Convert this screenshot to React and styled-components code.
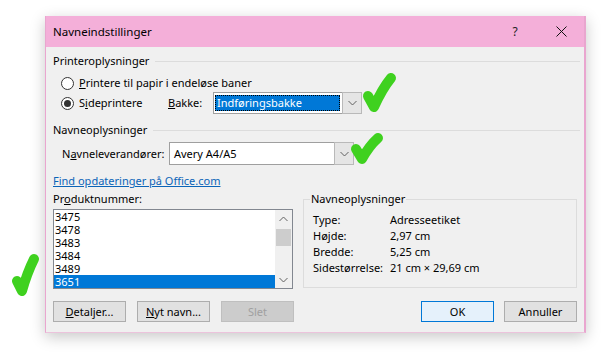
import React from "react";
import styled, { createGlobalStyle } from "styled-components";

const Global = createGlobalStyle`
  html, body { margin: 0; padding: 0; background: #ffffff; }
  body { font-family: "Noto Sans", "Open Sans", sans-serif; font-size: 11px; color: #000; }
  * { box-sizing: border-box; }
`;

const Page = styled.div`
  position: relative;
  width: 608px;
  height: 355px;
  padding: 16px 0 0 45px;
  overflow: hidden;
`;

const Dialog = styled.div`
  width: 541px;
  height: 317px;
  background: #f0f0f0;
  border-left: 1px solid #e9a6cf;
  border-right: 2px solid #e9a6cf;
  border-bottom: 1px solid #ecc3dc;
  box-shadow: 0 4px 14px rgba(0, 0, 0, 0.22);
  display: flex;
  flex-direction: column;
`;

const TitleBar = styled.div`
  height: 31px;
  background: #f4afd9;
  display: flex;
  align-items: center;
  padding-left: 7px;
`;

const TitleText = styled.div`
  flex: 1;
  font-size: 11.5px;
  line-height: 16px;
`;

const TitleButton = styled.div`
  width: 46px;
  height: 31px;
  display: flex;
  align-items: center;
  justify-content: center;
  font-size: 12px;
  color: #222;
`;

const Body = styled.div`
  flex: 1;
  padding: 6px 7px 0 7px;
  display: flex;
  flex-direction: column;
`;

const SectionHeader = styled.div`
  display: flex;
  align-items: center;
  height: 16px;
  margin-top: ${(p) => p.$mt || 0}px;
  margin-right: -3px;
  line-height: 16px;
  &::after {
    content: "";
    flex: 1;
    height: 1px;
    background: #dcdcdc;
    margin-left: 6px;
  }
`;

const Row = styled.div`
  display: flex;
  align-items: center;
  height: ${(p) => p.$h || 16}px;
  margin-top: ${(p) => p.$mt || 0}px;
  padding-left: ${(p) => p.$indent || 0}px;
`;

const Radio = styled.span`
  width: 13px;
  height: 13px;
  border: 1px solid #333;
  border-radius: 50%;
  background: #fff;
  display: flex;
  align-items: center;
  justify-content: center;
  margin-right: 5px;
  flex: none;
  &::after {
    content: "";
    width: 7px;
    height: 7px;
    border-radius: 50%;
    background: ${(p) => (p.$checked ? "#333" : "transparent")};
  }
`;

const Label = styled.span`
  display: inline-block;
  width: ${(p) => (p.$w ? `${p.$w}px` : "auto")};
  line-height: 16px;
  white-space: nowrap;
  flex: none;
`;

const Combo = styled.div`
  width: ${(p) => p.$w}px;
  height: ${(p) => p.$h}px;
  border: 1px solid #9f9f9f;
  background: #fff;
  display: flex;
  align-items: stretch;
`;

const ComboText = styled.div`
  flex: 1;
  display: flex;
  align-items: center;
  padding: 2px 2px 2px ${(p) => (p.$selected ? 1 : 4)}px;
  min-width: 0;
`;

const Highlight = styled.span`
  flex: 1;
  height: 100%;
  background: #0078d7;
  color: #fff;
  outline: 1px dotted #000;
  outline-offset: -1px;
  padding-left: 2px;
  display: flex;
  align-items: center;
  line-height: 16px;
`;

const DropButton = styled.div`
  width: 20px;
  background: #e5e5e5;
  border: 1px solid #b9b9b9;
  margin: -1px -1px -1px 0;
  display: flex;
  align-items: center;
  justify-content: center;
`;

const Link = styled.a`
  color: #0b64b8;
  text-decoration: underline;
  line-height: 16px;
  margin-top: 8px;
  align-self: flex-start;
  cursor: pointer;
`;

const Lower = styled.div`
  display: grid;
  grid-template-columns: 240px 274px;
  column-gap: 10px;
  margin-top: 2px;
`;

const LeftCol = styled.div`
  display: flex;
  flex-direction: column;
`;

const ListBox = styled.div`
  margin-top: 2px;
  height: 80px;
  border: 1px solid #828790;
  background: #fff;
  display: flex;
`;

const Items = styled.div`
  flex: 1;
  display: flex;
  flex-direction: column;
`;

const Item = styled.div`
  height: 13px;
  line-height: 13px;
  padding-left: 1px;
  background: ${(p) => (p.$selected ? "#0078d7" : "transparent")};
  color: ${(p) => (p.$selected ? "#fff" : "#000")};
`;

const ScrollBar = styled.div`
  width: 17px;
  background: #f0f0f0;
  display: flex;
  flex-direction: column;
`;

const ScrollArrow = styled.div`
  height: 17px;
  display: flex;
  align-items: center;
  justify-content: center;
`;

const ScrollTrack = styled.div`
  flex: 1;
  padding: 2px 1px 0 1px;
`;

const Thumb = styled.div`
  height: 17px;
  background: #cdcdcd;
`;

const GroupBox = styled.fieldset`
  margin: 0;
  padding: 5px 9px 10px 9px;
  border: 1px solid #dcdcdc;
  height: 97px;
  min-width: 0;
`;

const Legend = styled.legend`
  padding: 0 1px;
  margin-left: -3px;
  line-height: 16px;
`;

const InfoRow = styled.div`
  display: grid;
  grid-template-columns: 77px 1fr;
  height: 16px;
  line-height: 16px;
`;

const ButtonRow = styled.div`
  display: flex;
  margin-top: 12px;
`;

const ButtonGroup = styled.div`
  display: flex;
  gap: ${(p) => p.$gap}px;
  margin-left: ${(p) => (p.$right ? "auto" : "0")};
`;

const Button = styled.div`
  width: 73px;
  height: 21px;
  display: flex;
  align-items: center;
  justify-content: center;
  line-height: 16px;
  background: ${(p) => (p.$default ? "#e5f1fb" : p.$disabled ? "#cccccc" : "#e1e1e1")};
  border: 1px solid ${(p) => (p.$default ? "#0078d7" : p.$disabled ? "#bfbfbf" : "#adadad")};
  color: ${(p) => (p.$disabled ? "#a0a0a0" : "#000")};
`;

const Check = styled.svg`
  position: absolute;
  left: ${(p) => p.$x}px;
  top: ${(p) => p.$y}px;
  overflow: visible;
`;

const Chevron = ({ up, color = "#606060" }) => (
  <svg width="9" height="6" viewBox="0 0 9 6">
    <polyline
      points={up ? "0.5,5 4.5,1 8.5,5" : "0.5,1 4.5,5 8.5,1"}
      fill="none"
      stroke={color}
      strokeWidth="1"
    />
  </svg>
);

const CloseIcon = () => (
  <svg width="11" height="11" viewBox="0 0 11 11">
    <path d="M0.5 0.5 L10.5 10.5 M10.5 0.5 L0.5 10.5" stroke="#111" strokeWidth="1" />
  </svg>
);

const CheckMark = ({ x, y, d }) => (
  <Check $x={x} $y={y} width="40" height="45">
    <path
      d={d}
      fill="none"
      stroke="#3fd11f"
      strokeWidth="10"
      strokeLinecap="round"
      strokeLinejoin="round"
    />
  </Check>
);

const items = ["3475", "3478", "3483", "3484", "3489", "3651"];

export default function App() {
  return (
    <>
      <Global />
      <Page>
        <Dialog>
          <TitleBar>
            <TitleText>Navneindstillinger</TitleText>
            <TitleButton>?</TitleButton>
            <TitleButton>
              <CloseIcon />
            </TitleButton>
          </TitleBar>
          <Body>
            <SectionHeader>Printeroplysninger</SectionHeader>
            <Row $mt={6} $indent={8}>
              <Radio />
              <Label>
                <u>P</u>rintere til papir i endeløse baner
              </Label>
            </Row>
            <Row $mt={1} $h={22} $indent={8}>
              <Radio $checked />
              <Label $w={89}>
                S<u>i</u>deprintere
              </Label>
              <Label $w={45}>
                <u>B</u>akke:
              </Label>
              <Combo $w={149} $h={22}>
                <ComboText $selected>
                  <Highlight>Indføringsbakke</Highlight>
                </ComboText>
                <DropButton>
                  <Chevron />
                </DropButton>
              </Combo>
            </Row>
            <SectionHeader $mt={8}>Navneoplysninger</SectionHeader>
            <Row $mt={4} $h={23} $indent={9}>
              <Label $w={107}>
                N<u>a</u>vneleverandører:
              </Label>
              <Combo $w={185} $h={23}>
                <ComboText>Avery A4/A5</ComboText>
                <DropButton>
                  <Chevron />
                </DropButton>
              </Combo>
            </Row>
            <Link>Find opdateringer på Office.com</Link>
            <Lower>
              <LeftCol>
                <Label>
                  Pr<u>o</u>duktnummer:
                </Label>
                <ListBox>
                  <Items>
                    {items.map((it) => (
                      <Item key={it} $selected={it === "3651"}>
                        {it}
                      </Item>
                    ))}
                  </Items>
                  <ScrollBar>
                    <ScrollArrow>
                      <Chevron up />
                    </ScrollArrow>
                    <ScrollTrack>
                      <Thumb />
                    </ScrollTrack>
                    <ScrollArrow>
                      <Chevron />
                    </ScrollArrow>
                  </ScrollBar>
                </ListBox>
              </LeftCol>
              <GroupBox>
                <Legend>Navneoplysninger</Legend>
                <InfoRow>
                  <span>Type:</span>
                  <span>Adresseetiket</span>
                </InfoRow>
                <InfoRow>
                  <span>Højde:</span>
                  <span>2,97 cm</span>
                </InfoRow>
                <InfoRow>
                  <span>Bredde:</span>
                  <span>5,25 cm</span>
                </InfoRow>
                <InfoRow>
                  <span>Sidestørrelse:</span>
                  <span>21 cm × 29,69 cm</span>
                </InfoRow>
              </GroupBox>
            </Lower>
            <ButtonRow>
              <ButtonGroup $gap={11}>
                <Button>
                  <span>
                    <u>D</u>etaljer...
                  </span>
                </Button>
                <Button>
                  <span>
                    <u>N</u>yt navn...
                  </span>
                </Button>
                <Button $disabled>Slet</Button>
              </ButtonGroup>
              <ButtonGroup $gap={10} $right>
                <Button $default>OK</Button>
                <Button>Annuller</Button>
              </ButtonGroup>
            </ButtonRow>
          </Body>
        </Dialog>
        <CheckMark x={362} y={73} d="M6 23 L12 34 Q20 16 29 5" />
        <CheckMark x={351} y={133} d="M5 16 L11 26 Q18 13 27 5" />
        <CheckMark x={12} y={253} d="M5 28 L10 38 Q15 20 22 6" />
      </Page>
    </>
  );
}
